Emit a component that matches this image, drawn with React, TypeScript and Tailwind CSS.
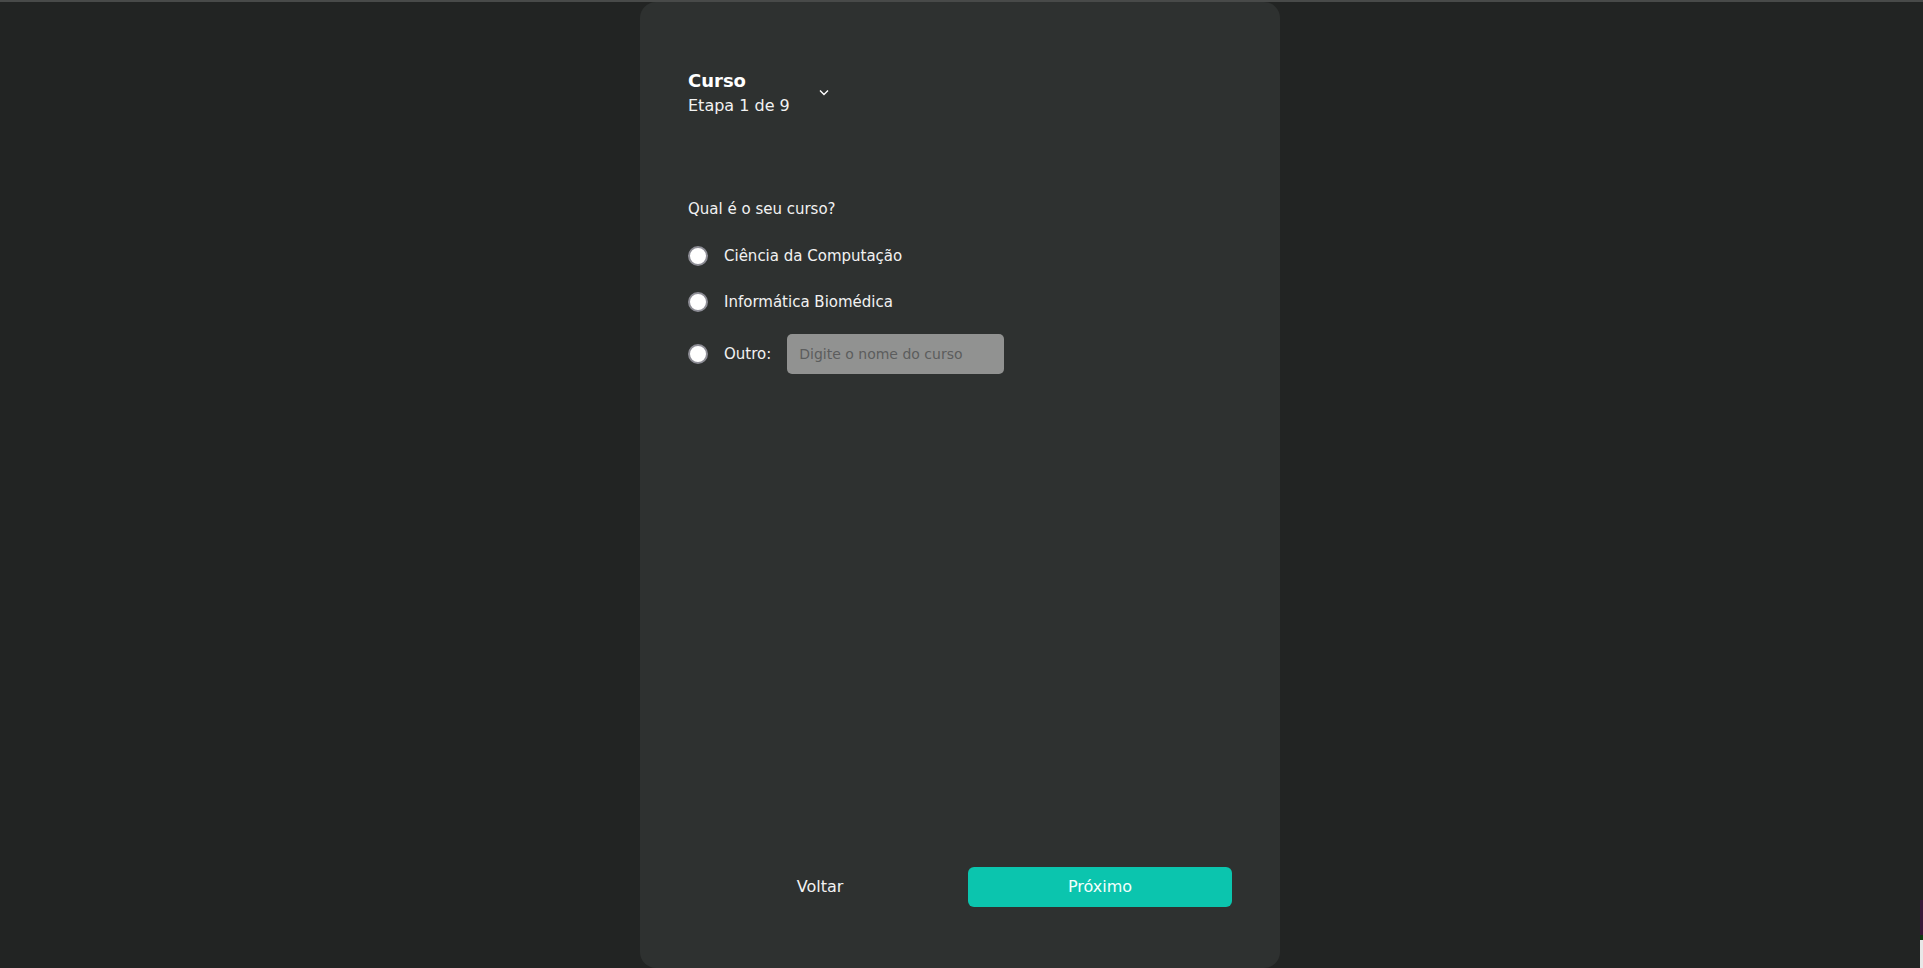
import React from "react";

function Radio() {
  return (
    <span className="inline-block w-5 h-5 shrink-0 rounded-full bg-white border-2 border-[#8d8d95]" />
  );
}

export default function App() {
  return (
    <div
      className="w-full h-[968px] overflow-hidden bg-[#222423] border-t-2 border-[#484a49] flex"
      style={{ fontFamily: '"DejaVu Sans", "Liberation Sans", sans-serif' }}
    >
      <div className="w-[1920px] shrink-0">
        <div className="mx-auto w-[640px] h-[966px] rounded-2xl bg-[#2e3130] flex flex-col px-12 pt-[67px] pb-[61px] text-[#f2f2f2]">
          <div className="flex items-center">
            <div className="flex flex-col">
              <span className="text-[18px] leading-6 font-bold text-white">Curso</span>
              <span className="text-[16px] leading-6 mt-[1px]">Etapa 1 de 9</span>
            </div>
            <button className="ml-[29px] mt-[-2px] w-[10px] h-[7px] flex items-center justify-center">
              <svg width="10" height="7" viewBox="0 0 10 7" fill="none">
                <path d="M1 1.5 L5 5.5 L9 1.5" stroke="#ffffff" strokeWidth="1.4" />
              </svg>
            </button>
          </div>

          <div className="mt-[80px] text-[15px] leading-[22px]">Qual é o seu curso?</div>

          <label className="mt-[25px] flex items-center h-[22px] text-[15px] leading-[22px]">
            <Radio />
            <span className="ml-4">Ciência da Computação</span>
          </label>
          <label className="mt-[24px] flex items-center h-[22px] text-[15px] leading-[22px]">
            <Radio />
            <span className="ml-4">Informática Biomédica</span>
          </label>
          <div className="mt-[21px] flex items-center h-10 text-[15px] leading-[22px]">
            <Radio />
            <span className="ml-4">Outro:</span>
            <input
              className="ml-4 w-[217px] h-10 rounded-[5px] bg-[#919291] px-3 text-[14px] text-[#2e3130] placeholder:text-[#5c5d5d] outline-none"
              placeholder="Digite o nome do curso"
              style={{ fontFamily: '"DejaVu Sans", sans-serif' }}
            />
          </div>

          <div className="mt-auto flex gap-4">
            <button className="flex-1 h-10 text-[16px] text-[#f2f2f2]" style={{ fontFamily: '"DejaVu Sans", sans-serif' }}>
              Voltar
            </button>
            <button
              className="flex-1 h-10 rounded-md bg-[#0bc5ae] text-[16px] text-[#f4fffd]"
              style={{ fontFamily: '"DejaVu Sans", sans-serif' }}
            >
              Próximo
            </button>
          </div>
        </div>
      </div>
      <div className="w-[3px] shrink-0 flex flex-col">
        <div className="h-[898px]" />
        <div className="h-[35px] bg-[#3a1838]" />
        <div className="h-[5px] bg-[#0f3a12]" />
        <div className="flex-1 bg-[#e8e8e8]" />
      </div>
    </div>
  );
}
